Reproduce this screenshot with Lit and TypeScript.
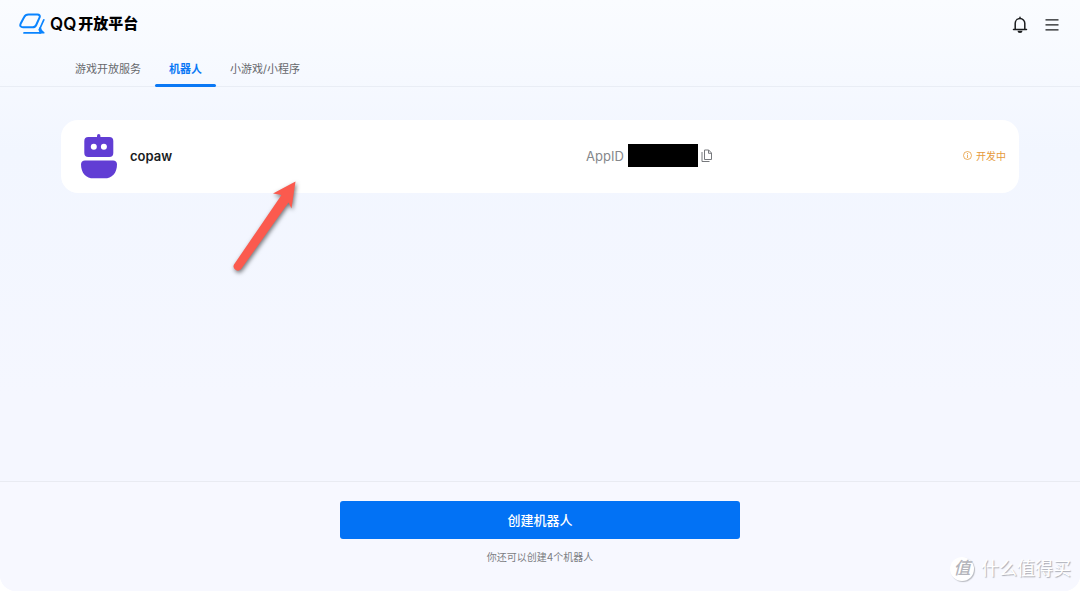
import { LitElement, html, css, svg } from "lit";
import { customElement, state } from "lit/decorators.js";

const TABS = ["游戏开放服务", "机器人", "小游戏/小程序"];

@customElement("app-root")
export class AppRoot extends LitElement {
  @state() private active = 1;

  static styles = css`
    :host {
      display: block;
      background: #fff;
      font-family: Inter, "Noto Sans CJK SC", sans-serif;
      color: #1a1c1e;
    }
    * { box-sizing: border-box; }
    button { font: inherit; border: 0; background: none; padding: 0; color: inherit; cursor: pointer; }
    svg { display: block; }
    .page {
      position: relative;
      display: flex;
      flex-direction: column;
      min-height: 100vh;
      overflow: hidden;
      border-radius: 0 0 16px 16px;
      background: linear-gradient(#fafcff 0, #f2f6ff 150px, #f5f7ff 400px);
    }
    .top {
      display: flex;
      align-items: center;
      justify-content: space-between;
      height: 47px;
      padding: 0 21px 0 19px;
    }
    .brand { display: flex; align-items: center; gap: 5px; color: #000; text-decoration: none; }
    .name { display: flex; align-items: center; gap: 2px; font-size: 15px; line-height: 24px; font-weight: 900; }
    .latin { font-size: 17px; font-weight: 600; }
    .actions { display: flex; gap: 17px; padding-top: 2px; color: #1a1c1e; }
    .tabs { display: flex; height: 40px; padding: 0 61px; border-bottom: 1px solid #e9edf5; }
    .tab {
      position: relative;
      padding: 2px 14px 0;
      font-size: 11px;
      line-height: 40px;
      color: #66686c;
    }
    .tab.on { color: #0a78f5; font-weight: 700; }
    .tab.on::after {
      content: "";
      position: absolute;
      left: 0;
      right: 0;
      bottom: -1px;
      height: 3px;
      border-radius: 2px;
      background: #0a78f5;
    }
    .list { flex: 1; padding: 33px 61px; }
    .card {
      display: grid;
      grid-template-columns: 525px 1fr auto;
      align-items: center;
      height: 73px;
      padding: 0 13px 2px 0;
      border-radius: 17px;
      background: #fff;
    }
    .bot { display: flex; align-items: center; gap: 13px; padding-left: 20px; font-size: 13px; font-weight: 600; }
    .app { display: flex; align-items: center; gap: 4px; font-size: 13px; color: #85878b; }
    .secret { width: 70px; height: 23px; background: #000; }
    .copy { margin-left: -1px; }
    .status { display: flex; align-items: center; gap: 4px; font-size: 10px; color: #e69a3a; }
    .foot {
      display: flex;
      flex-direction: column;
      align-items: center;
      height: 110px;
      padding-top: 19px;
      border-top: 1px solid #e9ebf2;
      background: #f7f8ff;
    }
    .create {
      width: 400px;
      max-width: 90%;
      height: 38px;
      padding-bottom: 2px;
      border-radius: 3px;
      background: #0272f5;
      color: #fff;
      font-size: 13px;
      font-weight: 500;
    }
    .note { margin: 10px 0 0; font-size: 10px; line-height: 16px; color: #7c7e83; }
    .arrow { position: absolute; left: 225px; top: 174px; pointer-events: none; }
    .mark {
      position: absolute;
      right: 9px;
      bottom: 9px;
      display: flex;
      align-items: center;
      gap: 7px;
      color: #fff;
      font-size: 18px;
      line-height: 26px;
      text-shadow: 1px 1px 1px #aaacb4;
      pointer-events: none;
    }
    .seal {
      width: 24px;
      height: 24px;
      border-radius: 50%;
      background: #fff;
      box-shadow: 1px 1px 1px #b9bbc2;
      color: #b4b5bb;
      font-size: 17px;
      line-height: 23px;
      font-weight: 500;
      font-style: italic;
      text-align: center;
      text-shadow: none;
    }
  `;

  private logo = svg`<svg width="26" height="22" viewBox="0 0 26 22" fill="none" stroke="#0a84ff" stroke-width="2" stroke-linejoin="round" stroke-linecap="round">
    <path d="M9.500 1.500h8.900c2 0 2.900 1.400 2.100 3.100l-3.300 7.400c-.7 1.500-1.900 2.300-3.600 2.300H4c-2.300 0-3.300-1.500-2.400-3.500L5.200 4c.8-1.700 2.300-2.500 4.300-2.500Z"/>
    <path d="M24.800 6.800L20.900 15.500" stroke-width="1.700"/>
    <path d="M5 19.900h16.500" stroke-width="1.700"/>
    <path d="M21.300 14.500c.2 2 1.300 3.700 3.600 5.400h-4.200c.5-1.200.3-2.300-.6-3.200Z" fill="#0a84ff" stroke-width="1.400"/></svg>`;

  render() {
    return html`
      <div class="page">
        <header class="top">
          <a class="brand" href="#">${this.logo}<span class="name"><span class="latin">QQ</span><span>开放平台</span></span></a>
          <div class="actions">
            <button aria-label="通知">
              <svg width="16" height="18" viewBox="0 0 16 18" fill="none" stroke="currentColor" stroke-width="1.500" stroke-linecap="round" stroke-linejoin="round">
                <path d="M8 1.300v1M3.200 13.500V7.300a4.800 4.800 0 0 1 9.600 0v6.200M1.500 13.500h13"/>
                <path d="M5.500 14.800h5A2.500 2.200 0 0 1 8 17 2.500 2.200 0 0 1 5.500 14.800Z" fill="currentColor" stroke="none"/>
              </svg>
            </button>
            <button aria-label="菜单">
              <svg width="14" height="18" viewBox="0 0 14 18" stroke="currentColor" stroke-width="1.300">
                <path d="M.5 3.800h13M.5 8.800h13M.5 13.800h13"/>
              </svg>
            </button>
          </div>
        </header>
        <nav class="tabs" role="tablist">
          ${TABS.map((t, i) => html`<button role="tab" aria-selected=${i === this.active ? "true" : "false"}
            class=${i === this.active ? "tab on" : "tab"} @click=${() => (this.active = i)}>${t}</button>`)}
        </nav>
        <main class="list">
          <article class="card">
            <div class="bot">
              <svg width="36" height="46" viewBox="0 0 36 46" fill="#613dd4">
                <rect x="16" y="1" width="3.400" height="6" rx="1.700"/>
                <rect x="3.300" y="4" width="29" height="20" rx="4"/>
                <path d="M4 27.500h28c2.400 0 4 1.500 4 3.900 0 8.600-5.200 13.900-12.500 13.900h-11C5.200 45.300 0 40 0 31.400c0-2.400 1.600-3.900 4-3.900Z"/>
                <circle cx="12.800" cy="13.800" r="3" fill="#fff"/><circle cx="22.900" cy="13.800" r="3" fill="#fff"/>
              </svg>
              <span>copaw</span>
            </div>
            <div class="app">
              <span>AppID</span><span class="secret"></span>
              <button class="copy" aria-label="复制">
                <svg width="12" height="13" viewBox="0 0 12 13" fill="none" stroke="#77797d" stroke-width="1">
                  <path d="M3.500 1h4.200L10.500 4v6.500h-7ZM7.500 1v3.300h3M1 3v9.500h7.500"/>
                </svg>
              </button>
            </div>
            <div class="status">
              <svg width="9" height="9" viewBox="0 0 9 9" fill="none" stroke="currentColor" stroke-width=".8">
                <circle cx="4.500" cy="4.500" r="4"/><path d="M4.500 2v1M4.500 3.700V7"/>
              </svg>
              <span>开发中</span>
            </div>
          </article>
        </main>
        <footer class="foot">
          <button class="create">创建机器人</button>
          <p class="note">你还可以创建4个机器人</p>
        </footer>
        <svg class="arrow" width="82" height="104" viewBox="0 0 82 104">
          <path d="M70.500 7.500L48 19.500l8.500 1.500L9 90.500a4.300 4.300 0 0 0 7 4.800L63.500 28.500l3 6Z" fill="#fb5a4e" style="filter:drop-shadow(1px 2px 2px #0008)"/>
        </svg>
        <div class="mark"><span class="seal">值</span><span>什么值得买</span></div>
      </div>
    `;
  }
}
